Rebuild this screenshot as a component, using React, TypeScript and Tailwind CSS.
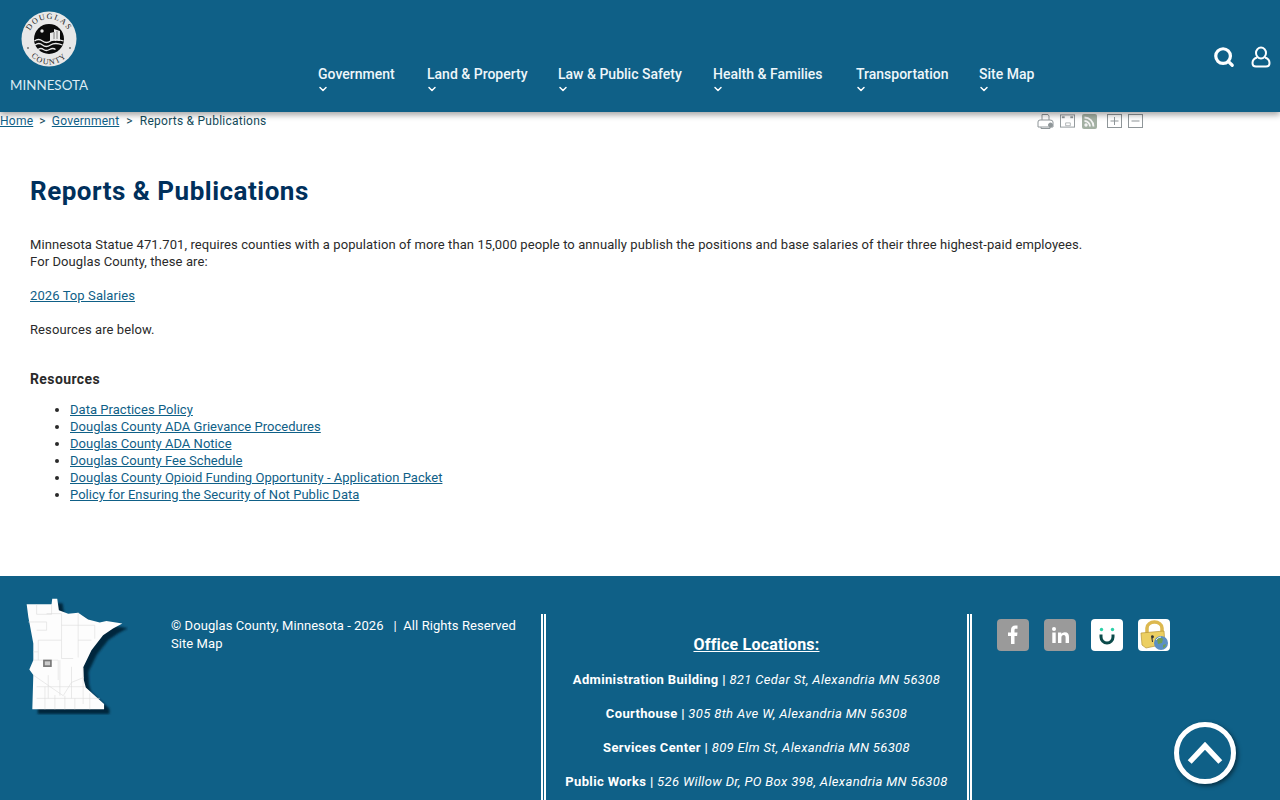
import { ChevronDown, Search } from "lucide-react"

const navItems = [
  { title: "Government", width: "w-[77px]" },
  { title: "Land & Property", width: "w-[99px]" },
  { title: "Law & Public Safety", width: "w-[123px]" },
  { title: "Health & Families", width: "w-[111px]" },
  { title: "Transportation", width: "w-[91px]" },
  { title: "Site Map", width: "w-[54px]" },
]

const resources = [
  "Data Practices Policy",
  "Douglas County ADA Grievance Procedures",
  "Douglas County ADA Notice",
  "Douglas County Fee Schedule",
  "Douglas County Opioid Funding Opportunity - Application Packet",
  "Policy for Ensuring the Security of Not Public Data",
]

const offices = [
  { name: "Administration Building", address: "821 Cedar St, Alexandria MN 56308" },
  { name: "Courthouse", address: "305 8th Ave W, Alexandria MN 56308" },
  { name: "Services Center", address: "809 Elm St, Alexandria MN 56308" },
  { name: "Public Works", address: "526 Willow Dr, PO Box 398, Alexandria MN 56308" },
]

const mnOutline =
  "80,72 155,72 157,55 172,55 177,90 205,100 235,97 265,118 300,127 320,122 368,130 340,145 310,165 275,210 250,262 252,300 258,322 313,372 313,388 97,388 100,285 88,268 100,240 100,190 85,110"

function Seal() {
  return (
    <svg viewBox="0 0 56 56" className="h-[56px] w-[56px]">
      <circle cx="28" cy="28" r="27.5" fill="#e8e8e8" />
      <defs>
        <path id="sealTop" d="M7 29a21 21 0 0 1 42 0" />
        <path id="sealBottom" d="M4.500 30a23.500 23.500 0 0 0 47 0" />
      </defs>
      <text fontSize="8" fill="#222" fontFamily="Liberation Serif, serif" letterSpacing="1.2">
        <textPath href="#sealTop" startOffset="50%" textAnchor="middle">DOUGLAS</textPath>
      </text>
      <text fontSize="8" fill="#222" fontFamily="Liberation Serif, serif" letterSpacing="1.2">
        <textPath href="#sealBottom" startOffset="50%" textAnchor="middle">COUNTY</textPath>
      </text>
      <circle cx="28" cy="28" r="15" fill="#0a0a0a" />
      <path d="M29 30v-8l4-1v-3l6 2v10z" fill="#e8e8e8" />
      <path d="M33 21v9M36 20v10" stroke="#666" strokeWidth="0.8" />
      <circle cx="21" cy="20" r="1.7" fill="#e8e8e8" />
      <path d="M13.500 30q4-3 8 0t8 0 13 0M14 34q4-3 7.500 0t8 0 12 0M17 38.500q3-2 5.500 0t6 0 6 0" fill="none" stroke="#e8e8e8" strokeWidth="1.3" />
      <circle cx="7" cy="37" r="0.8" fill="#222" />
      <circle cx="49" cy="37" r="0.8" fill="#222" />
    </svg>
  )
}

function StateMap() {
  return (
    <svg viewBox="75 50 310 355" className="h-[118px] w-[103px] shrink-0">
      <defs>
        <filter id="mnBlur"><feGaussianBlur stdDeviation="4" /></filter>
      </defs>
      <polygon points={mnOutline} fill="#04283c" transform="translate(16 14)" filter="url(#mnBlur)" />
      <polygon points={mnOutline} fill="#fdfdfd" />
      <path
        d="M110 72v30h45v-30M105 125h35v25h-30M85 125h20M140 100h45v80M115 180h70v55h35M115 180v60h-15M115 240h60v60M235 97v135M185 135h100M235 180h40M100 285l90 62 25-40 37-15M110 320h145M110 355h190M145 285v70M180 240v107M215 260v95M250 262v110M135 320v68M165 345v43M195 347v41M225 355v33M270 340v48M100 215h15M285 135v40"
        fill="none"
        stroke="#dcdcdc"
        strokeWidth="1.800"
      />
      <rect x="132" y="241" width="21" height="17" fill="#ccc" stroke="#777" strokeWidth="5" />
    </svg>
  )
}

function ToolIcons() {
  return (
    <div className="flex items-center text-[#8f9699]">
      <svg viewBox="0 0 17 16" className="h-[16px] w-[17px]" fill="none" stroke="currentColor">
        <path d="M5 7V1.500h6l1 1.500v4M1 14V9q0-2 2-2h10q3 0 3 2v5zM4 14v1.500h9V14" />
        <circle cx="13.500" cy="12" r="2" fill="currentColor" />
      </svg>
      <svg viewBox="0 0 16 14" className="ml-[6px] h-[14px] w-[15px]" fill="none" stroke="currentColor">
        <rect x="0.500" y="0.500" width="15" height="13" />
        <rect x="2" y="2" width="3" height="2" fill="currentColor" stroke="none" />
        <rect x="11" y="2" width="3" height="2" fill="currentColor" stroke="none" />
        <path d="M6 9h5v3H6z" strokeWidth="0.7" />
      </svg>
      <svg viewBox="0 0 15 15" className="ml-[7px] h-[15px] w-[15px]">
        <rect width="15" height="15" rx="2" fill="#a3b0a3" />
        <circle cx="4" cy="11" r="1.700" fill="#f4f4f4" />
        <path d="M2.500 7a5.500 5.500 0 0 1 5.500 5.500M2.500 3.500a9 9 0 0 1 9 9" fill="none" stroke="#f4f4f4" strokeWidth="1.800" />
      </svg>
      <svg viewBox="0 0 15 14" className="ml-[10px] h-[14px] w-[15px]" fill="none" stroke="currentColor">
        <rect x="0.500" y="0.500" width="14" height="13" />
        <path d="M3.500 7h8M7.500 3v8" />
      </svg>
      <svg viewBox="0 0 15 14" className="ml-[6px] h-[14px] w-[15px]" fill="none" stroke="currentColor">
        <rect x="0.500" y="0.500" width="14" height="13" />
        <path d="M3.500 7h8" />
      </svg>
    </div>
  )
}

function SocialIcons() {
  return (
    <div className="flex gap-[15px]">
      <div className="flex h-[32px] w-[32px] items-center justify-center rounded-[4px] bg-[#9a9a9a]">
        <svg viewBox="0 0 32 32" className="h-[32px] w-[32px]">
          <path d="M14 25V17h-3v-3.500h3V11c0-3 1.700-4.500 4.300-4.500l2.200.1v3.200H19c-1.300 0-1.500.6-1.500 1.600v2.100h3l-.4 3.500h-2.600v8z" fill="#fff" />
        </svg>
      </div>
      <div className="flex h-[32px] w-[32px] items-center justify-center rounded-[4px] bg-[#9a9a9a]">
        <svg viewBox="0 0 32 32" className="h-[32px] w-[32px]">
          <circle cx="10" cy="10" r="2" fill="#fff" />
          <path d="M8.300 13.500h3.400V24H8.300zM14 13.500h3.300V15c.7-1.100 2-1.800 3.500-1.800 3 0 4.200 1.900 4.200 4.900V24h-3.400v-5.400c0-1.600-.5-2.500-1.900-2.500s-2.300 1-2.300 2.600V24H14z" fill="#fff" />
        </svg>
      </div>
      <div className="flex h-[32px] w-[32px] items-center justify-center rounded-[4px] bg-white">
        <svg viewBox="0 0 32 32" className="h-[32px] w-[32px]">
          <circle cx="10.500" cy="10.500" r="1.700" fill="#2bd0a8" />
          <circle cx="21.500" cy="10.500" r="1.700" fill="#2bd0a8" />
          <path d="M10 15.500v2.500a6 6 0 0 0 12 0v-2.500" fill="none" stroke="#0b4a4a" strokeWidth="3" />
        </svg>
      </div>
      <div className="flex h-[32px] w-[32px] items-center justify-center rounded-[4px] bg-white">
        <svg viewBox="0 0 32 32" className="h-[32px] w-[32px]">
          <path d="M9 14V9a7.500 6 0 0 1 15 0v5" fill="none" stroke="#dcb84f" strokeWidth="3.500" />
          <path d="M3 14l23-2 1 13-19 4-4-3z" fill="#eccf62" stroke="#b8963a" strokeWidth="0.700" />
          <path d="M13 17a1.600 1.600 0 1 1 1.500 2.500l.5 3.500h-1z" fill="#333" />
          <circle cx="23" cy="24" r="7" fill="#5c8fc4" />
          <path d="M19 20q4-2 6 0l-1 4-4 1zM25 26l3-1-1 3-2 1z" fill="#6f9e55" />
          <path d="M18 21q2-3 5-3" fill="none" stroke="#fff" strokeWidth="0.800" />
        </svg>
      </div>
    </div>
  )
}

export default function App() {
  return (
    <div className="relative flex h-screen flex-col overflow-hidden bg-white font-['Roboto',sans-serif] text-[13px] text-[#2a2a2a]">
      <header className="relative z-10 flex h-[112px] shrink-0 bg-[#0f6087] text-white shadow-[0_3px_6px_rgba(0,0,0,0.35)]">
        <div className="flex w-[318px] shrink-0 flex-col items-start pl-[11px] pt-[11px]">
          <div className="ml-[10px]"><Seal /></div>
          <span className="-ml-[1px] mt-[10px] font-['Lato',sans-serif] text-[13.400px] leading-[17px] text-[#dcecf3]">MINNESOTA</span>
        </div>
        <nav className="flex gap-[32px] pt-[66px]">
          {navItems.map((item) => (
            <div key={item.title} className={`${item.width} flex flex-col`}>
              <span className="whitespace-nowrap text-[14px] leading-[17px] font-medium text-[#eef6fa]">{item.title}</span>
              <ChevronDown className="-ml-[1px] h-[12px] w-[12px]" strokeWidth={3} />
            </div>
          ))}
        </nav>
        <div className="ml-auto flex items-start gap-[16px] pr-[9px] pt-[46px]">
          <Search className="h-[22px] w-[22px]" strokeWidth={3.500} />
          <svg viewBox="0 0 20 22" className="h-[22px] w-[20px]" fill="none" stroke="currentColor" strokeWidth="2">
            <ellipse cx="10" cy="7" rx="5" ry="5.500" />
            <path d="M6 11.500C3 12.500 1.500 14.500 1.500 17c0 2.500 1.500 3.500 3.500 3.500h10c2 0 3.500-1 3.500-3.500 0-2.500-1.500-4.500-4.500-5.500" />
          </svg>
        </div>
      </header>

      <main className="flex-1">
        <div className="flex h-[18px] items-center justify-between pr-[137px] text-[12px] tracking-[0.24px] text-[#124a5a]">
          <div className="flex">
            <a className="text-[#0f6087] underline">Home</a>
            <span className="mx-[6px]">&gt;</span>
            <a className="text-[#0f6087] underline">Government</a>
            <span className="mx-[7px]">&gt;</span>
            <span>Reports &amp; Publications</span>
          </div>
          <ToolIcons />
        </div>

        <div className="pl-[30px]">
          <h1 className="mt-[43px] text-[26px] leading-[36px] font-bold tracking-[0.5px] text-[#00305c]">Reports &amp; Publications</h1>
          <div className="mt-[27px] leading-[17px] tracking-[0.09px]">
            <p>Minnesota Statue 471.701, requires counties with a population of more than 15,000 people to annually publish the positions and base salaries of their three highest-paid employees.</p>
            <p>For Douglas County, these are:</p>
            <p className="mt-[17px]"><a className="text-[#0f6087] underline">2026 Top Salaries</a></p>
            <p className="mt-[17px]">Resources are below.</p>
          </div>
          <h2 className="mt-[32px] text-[14px] leading-[18px] font-bold tracking-[0.4px]">Resources</h2>
          <ul className="mt-[13px] list-disc pl-[40px] leading-[17px] tracking-[0.03px]">
            {resources.map((r) => (
              <li key={r}><a className="text-[#0f6087] underline">{r}</a></li>
            ))}
          </ul>
        </div>
      </main>

      <footer className="flex h-[224px] shrink-0 bg-[#0f6087] pl-[25px] pt-[21px] text-white">
        <StateMap />
        <div className="ml-[43px] w-[370px] pt-[20px] leading-[18px] tracking-[0.07px]">
          <p className="whitespace-pre">© Douglas County, Minnesota - 2026   |  All Rights Reserved</p>
          <p>Site Map</p>
        </div>
        <div className="mt-[17px] flex w-[431px] flex-col items-center self-stretch border-x-[5px] border-double border-white pt-[21px]">
          <h3 className="text-[16px] leading-[20px] font-bold tracking-[0.2px] underline">Office Locations:</h3>
          {offices.map((o, i) => (
            <p key={o.name} className={`${i === 0 ? "mt-[15px]" : "mt-[14px]"} whitespace-nowrap leading-[20px] tracking-[0.35px]`}>
              <b>{o.name} | </b><i>{o.address}</i>
            </p>
          ))}
        </div>
        <div className="ml-[25px] pt-[22px]"><SocialIcons /></div>
      </footer>

      <a className="absolute left-[1174px] top-[722px] flex h-[62px] w-[62px] items-center justify-center rounded-full border-[5px] border-white shadow-[2px_2px_4px_rgba(0,0,0,0.5)]">
        <svg viewBox="0 0 40 28" className="h-[26px] w-[36px]">
          <path d="M3 24L20 6l17 18" fill="none" stroke="#fff" strokeWidth="6" />
        </svg>
      </a>
    </div>
  )
}
